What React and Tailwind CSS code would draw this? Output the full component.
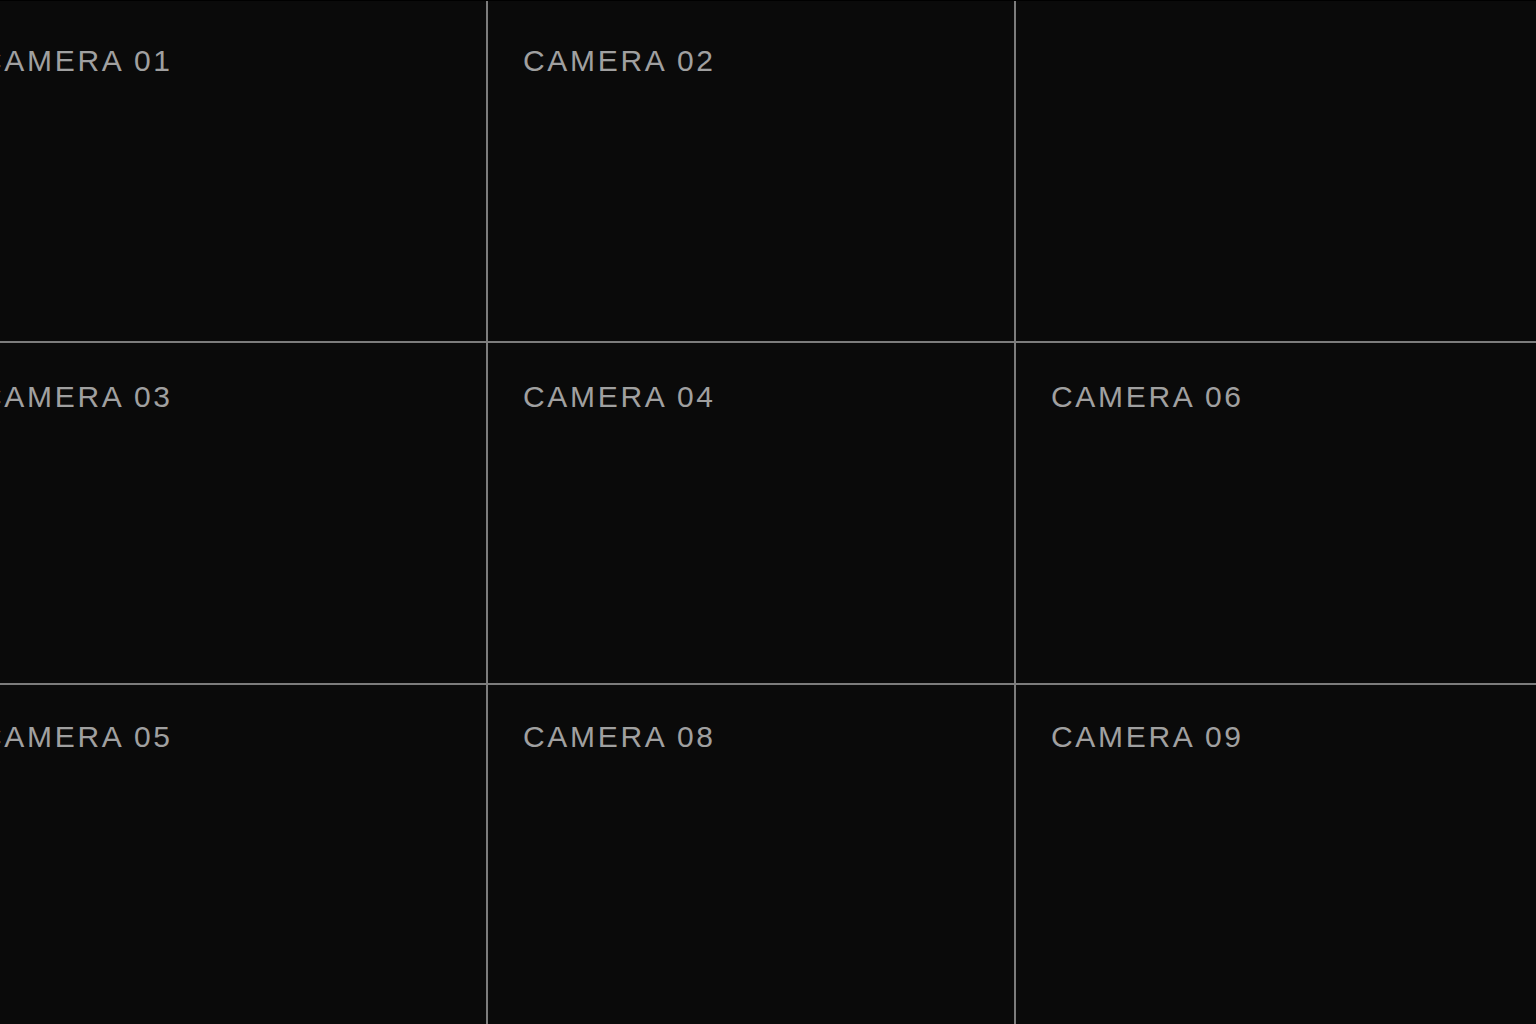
import React from "react";

const cells = [
  { label: "CAMERA 01", pad: "pt-[42px]" },
  { label: "CAMERA 02", pad: "pt-[42px]" },
  { label: null, pad: "pt-[42px]" },
  { label: "CAMERA 03", pad: "pt-[36px]" },
  { label: "CAMERA 04", pad: "pt-[36px]" },
  { label: "CAMERA 06", pad: "pt-[36px]" },
  { label: "CAMERA 05", pad: "pt-[34px]" },
  { label: "CAMERA 08", pad: "pt-[34px]" },
  { label: "CAMERA 09", pad: "pt-[34px]" },
];

export default function App() {
  return (
    <div className="w-[1536px] h-[1024px] overflow-hidden bg-[#0a0a0a] border-t border-black">
      <div className="-ml-[55px] grid grid-cols-[541px_526px_523px] grid-rows-[340px_340px_341px] gap-[2px] bg-[#7c7c7c] h-[1023px]">
        {cells.map((c, i) => (
          <div key={i} className={`bg-[#0a0a0a] px-[35px] ${c.pad}`}>
            {c.label && (
              <span className="text-[30px] leading-[36px] tracking-[0.09em] text-[#a0a0a0] font-['Liberation_Sans',sans-serif]">
                {c.label}
              </span>
            )}
          </div>
        ))}
      </div>
    </div>
  );
}
